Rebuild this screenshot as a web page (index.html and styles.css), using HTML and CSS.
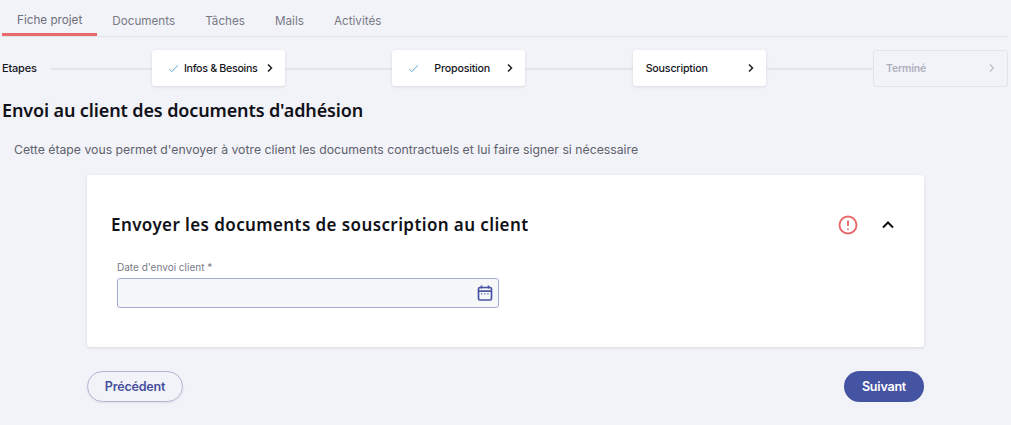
FILE: index.html
```html
<!DOCTYPE html>
<html lang="fr">
<head>
<meta charset="utf-8">
<title>Fiche projet</title>
<link rel="stylesheet" href="styles.css">
</head>
<body>
<nav class="tabs">
  <a class="tab tab-active">Fiche projet</a>
  <a class="tab">Documents</a>
  <a class="tab">Tâches</a>
  <a class="tab">Mails</a>
  <a class="tab">Activités</a>
</nav>
<section class="steps">
  <span class="steps-label">Etapes</span>
  <span class="line line-first"></span>
  <div class="step step-info">
    <svg class="check" viewBox="0 0 12 10"><path d="M1 5.5 4 8.5 11 1.5"/></svg>
    <span class="step-name">Infos &amp; Besoins</span>
    <svg class="chev" viewBox="0 0 8 10"><path d="M2 1.5 5.5 5 2 8.5"/></svg>
  </div>
  <span class="line"></span>
  <div class="step step-prop">
    <svg class="check" viewBox="0 0 12 10"><path d="M1 5.5 4 8.5 11 1.5"/></svg>
    <span class="step-name">Proposition</span>
    <svg class="chev" viewBox="0 0 8 10"><path d="M2 1.5 5.5 5 2 8.5"/></svg>
  </div>
  <span class="line"></span>
  <div class="step step-sous">
    <span class="step-name">Souscription</span>
    <svg class="chev" viewBox="0 0 8 10"><path d="M2 1.5 5.5 5 2 8.5"/></svg>
  </div>
  <span class="line"></span>
  <div class="step step-off">
    <span class="step-name">Terminé</span>
    <svg class="chev" viewBox="0 0 8 10"><path d="M2 1.5 5.5 5 2 8.5"/></svg>
  </div>
</section>
<h1 class="title">Envoi au client des documents d'adhésion</h1>
<p class="intro">Cette étape vous permet d'envoyer à votre client les documents contractuels et lui faire signer si nécessaire</p>
<main class="wrap">
  <section class="card">
    <header class="card-head">
      <h2 class="card-title">Envoyer les documents de souscription au client</h2>
      <svg class="alert" viewBox="0 0 20 20"><circle cx="10" cy="10" r="8.5"/><path d="M10 5.5v5.5"/><path d="M10 13.6v1.2"/></svg>
      <svg class="up" viewBox="0 0 12 8"><path d="M1 6.5 6 1.5 11 6.5"/></svg>
    </header>
    <label class="label">Date d'envoi client *</label>
    <div class="input">
      <svg class="cal" viewBox="0 0 16 16"><rect x="1.5" y="2.5" width="13" height="12.5" rx="1.5"/><path d="M1.5 6.2h13M4.5 .6v3M11.5 .6v3"/><path class="dots" d="M4 8.8h1.6M7.2 8.8h1.6M10.4 8.8H12"/></svg>
    </div>
  </section>
  <div class="actions">
    <button class="btn btn-ghost">Précédent</button>
    <button class="btn btn-main">Suivant</button>
  </div>
</main>
</body>
</html>
```
FILE: styles.css
```css
* { box-sizing: border-box; }
html, body { margin: 0; padding: 0; }
body {
  width: 1011px;
  height: 425px;
  overflow: hidden;
  background: #f2f3f8;
  font-family: Inter, "Liberation Sans", sans-serif;
  color: #16161d;
}
.tabs {
  display: flex;
  height: 37px;
  margin: 0 3px 0 2px;
  padding-top: 12px;
  border-bottom: 1px solid #e3e4e9;
}
.tab {
  height: 24px;
  padding: 0 15px;
  font-size: 11.7px;
  line-height: 18px;
  color: #787a86;
}
.tab-active {
  border-bottom: 3px solid #e96a6a;
  line-height: 16px;
  color: #6e707c;
}
.steps {
  display: flex;
  align-items: center;
  height: 36px;
  margin: 13px 3px 0 2px;
}
.steps-label { width: 49px; font-size: 11px; font-weight: 500; letter-spacing: -.2px; }
.line { flex: 1; height: 2px; margin-top: 2px; background: #e3e4e9; }
.line-first { flex: none; width: 101px; }
.step {
  display: flex;
  align-items: center;
  width: 133px;
  height: 36px;
  background: #fff;
  border-radius: 3px;
  box-shadow: 0 1px 3px rgba(40, 44, 80, .12);
  font-size: 10.7px;
  font-weight: 500;
  letter-spacing: -.2px;
}
.step-name { flex: 1; padding-top: 1px; white-space: nowrap; }
.check { width: 11px; height: 9px; fill: none; stroke: #5ba3cf; stroke-width: 1.1; }
.chev { width: 8px; height: 10px; fill: none; stroke: #1c1c24; stroke-width: 1.5; margin-top: -1px; }
.step-info { padding: 0 11px 0 16px; letter-spacing: -.33px; }
.step-info .check { margin-right: 5px; }
.step-prop { padding: 0 11px 0 16px; }
.step-prop .check { margin-right: 15px; }
.step-sous { padding: 0 11px 0 13px; }
.step-off {
  width: 135px;
  height: 37px;
  padding: 0 11px 0 12px;
  background: transparent;
  border: 1px solid #e3e4e9;
  box-shadow: none;
  color: #aeb0bd;
  font-size: 10.5px;
  font-weight: 600;
}
.step-off .chev { stroke: #bcbdc8; stroke-width: 1.1; }
.title {
  margin: 13px 0 0 2px;
  font-family: "Noto Sans", sans-serif;
  font-size: 18px;
  line-height: 22px;
  font-weight: 600;
  letter-spacing: -.12px;
  color: #111118;
}
.intro {
  margin: 20px 0 0 14px;
  font-size: 12.25px;
  line-height: 18px;
  color: #5f616d;
}
.wrap { width: 837px; margin: 16px 0 0 87px; }
.card {
  height: 172px;
  padding: 36px 25px 0 24px;
  background: #fff;
  border-radius: 3px;
  box-shadow: 0 1px 3px rgba(40, 44, 80, .14);
}
.card-head { display: flex; align-items: center; height: 28px; }
.card-title {
  flex: 1;
  margin: 0;
  font-family: "Noto Sans", sans-serif;
  font-size: 17px;
  line-height: 24px;
  font-weight: 600;
  letter-spacing: .4px;
  color: #111118;
}
.alert { width: 20px; height: 20px; fill: none; stroke: #e96a6a; stroke-width: 1.9; margin-right: 24px; }
.up { width: 12px; height: 8px; fill: none; stroke: #111118; stroke-width: 2; margin-right: 5px; }
.label {
  display: block;
  margin: 22px 0 0 6px;
  font-size: 10px;
  line-height: 13px;
  color: #797b87;
}
.input {
  display: flex;
  align-items: center;
  justify-content: flex-end;
  width: 382px;
  height: 30px;
  margin: 4px 0 0 6px;
  padding-right: 5px;
  background: #f6f7f9;
  border: 1px solid #a6a9d0;
  border-radius: 3px;
}
.cal { width: 16px; height: 16px; fill: none; stroke: #4a54a4; stroke-width: 1.7; }
.cal .dots { stroke-width: 1.3; stroke-dasharray: 1.2 .6; }
.actions { display: flex; justify-content: space-between; margin-top: 24px; }
.btn {
  height: 31px;
  border-radius: 16px;
  font-family: Inter, "Liberation Sans", sans-serif;
  font-size: 12.5px;
  font-weight: 600;
  letter-spacing: -.2px;
}
.btn-ghost { width: 96px; background: transparent; border: 1px solid #b2b5d3; color: #454f9e; box-shadow: 0 1px 2px rgba(40, 44, 80, .1); }
.btn-main { width: 80px; background: #4553a3; border: 0; color: #fff; }
```
